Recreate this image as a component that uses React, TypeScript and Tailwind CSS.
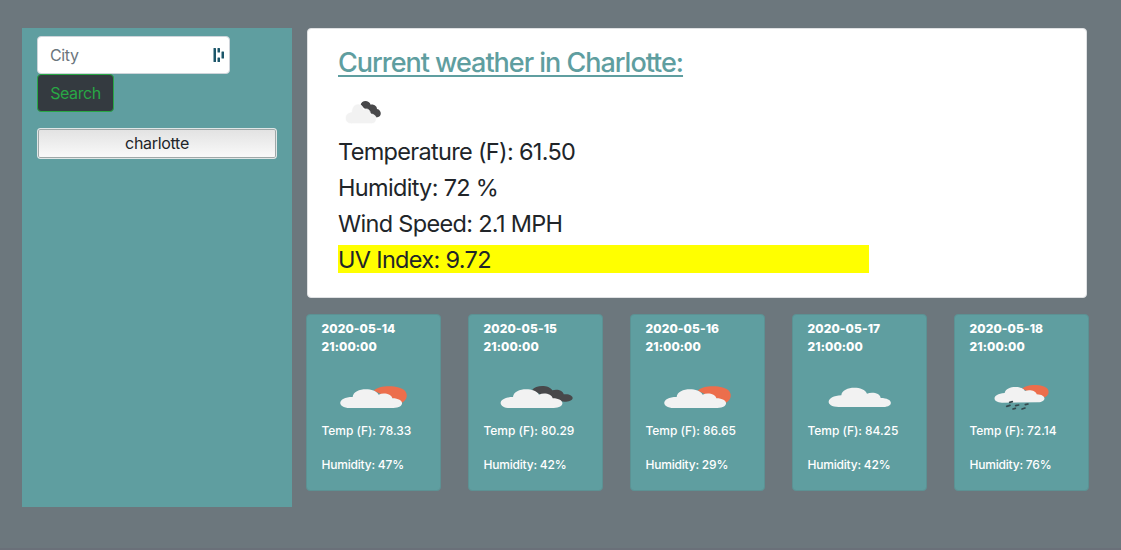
import React from 'react';

type IconKind = 'sun' | 'broken' | 'cloud' | 'rain';

const CLOUD =
  'M150 300 C110 300 110 267 158 267 C160 239 222 236 236 260 C251 253 275 258 277 271 C315 271 316 300 280 300 Z';

function WeatherIcon({ kind }: { kind: IconKind }) {
  return (
    <svg className="ml-[14px] block h-[30px] w-20" viewBox="105 225 240 90">
      {kind === 'sun' && (
        <>
          <path
            fill="#ec6e4c"
            d="M222 248 C236 231 300 230 316 250 C325 263 319 278 306 284 C296 274 284 275 250 262 Z"
          />
          <path fill="#f2f2f2" d={CLOUD} />
        </>
      )}
      {kind === 'broken' && (
        <>
          <path
            fill="#48484a"
            d="M210 247 C222 229 262 231 271 247 C286 242 304 248 305 259 C322 257 333 264 332 271 C331 279 312 284 296 280 L240 262 Z"
          />
          <path fill="#f2f2f2" transform="translate(-5 0)" d={CLOUD} />
        </>
      )}
      {kind === 'cloud' && (
        <path
          fill="#f2f2f2"
          d="M158 297 C116 297 118 264 166 262 C168 234 233 232 243 257 C258 251 283 255 284 270 C323 270 324 297 292 297 Z"
        />
      )}
      {kind === 'rain' && (
        <>
          <path
            fill="#ec6e4c"
            d="M223 242 C236 227 286 227 299 243 C306 254 299 264 290 268 L250 256 Z"
          />
          <path
            fill="#f2f2f2"
            d="M162 284 C130 283 132 257 170 255 C174 232 224 232 231 249 C246 244 264 249 266 259 C297 260 296 282 270 283 Z"
          />
          <g stroke="#34484d" strokeWidth="5" strokeLinecap="round">
            <path d="M185 283 L193 281" />
            <path d="M176 295 L186 292" />
            <path d="M203 293 L212 291" />
            <path d="M232 290 L240 288" />
            <path d="M195 303 L202 301" />
            <path d="M222 303 L231 300" />
          </g>
        </>
      )}
    </svg>
  );
}

const days: { date: string; icon: IconKind; temp: string; humidity: string }[] = [
  { date: '2020-05-14', icon: 'sun', temp: '78.33', humidity: '47%' },
  { date: '2020-05-15', icon: 'broken', temp: '80.29', humidity: '42%' },
  { date: '2020-05-16', icon: 'sun', temp: '86.65', humidity: '29%' },
  { date: '2020-05-17', icon: 'cloud', temp: '84.25', humidity: '42%' },
  { date: '2020-05-18', icon: 'rain', temp: '72.14', humidity: '76%' },
];

export default function App() {
  return (
    <div className="flex h-[550px] w-[1121px] items-start overflow-hidden border-b-2 border-[#6a7079] bg-[#6c777d] pt-7 pl-[22px] font-['Inter',sans-serif] text-[#212529]">
      <aside className="h-[479px] w-[270px] shrink-0 bg-[#5f9ea0] px-[15px] pt-2">
        <div className="flex h-[38px] w-[193px] items-center justify-between rounded-[4px] border border-[#ced4da] bg-white pr-1 pl-3">
          <span className="text-[16px] tracking-[-0.4px] text-[#6c757d]">City</span>
          <svg className="h-4 w-3" viewBox="0 0 12 16" fill="#1c566a">
            <rect x="0.5" y="1" width="2.5" height="14" rx="0.5" />
            <rect x="4.5" y="1" width="2.5" height="4.5" rx="0.5" />
            <rect x="4.5" y="10.5" width="2.5" height="4.5" rx="0.5" />
            <rect x="8.5" y="4.5" width="2.5" height="7" rx="0.5" />
          </svg>
        </div>
        <button className="block h-[38px] w-[77px] rounded-[4px] border border-[#28a745] bg-[#343a40] text-[16px] tracking-[-0.4px] text-[#28a745]">
          Search
        </button>
        <button className="mt-4 block h-[31px] w-60 rounded-[3px] border border-[#dfe6e6] bg-linear-to-b from-[#e2e2e2] to-[#fafafa] text-[16px] leading-[27px] tracking-[-0.3px] ring-1 ring-[#9fa8a8] ring-inset">
          charlotte
        </button>
      </aside>

      <main className="ml-[14px] w-[783px] shrink-0">
        <section className="ml-px h-[270px] w-[780px] rounded-[4px] border border-[#dfe1e3] bg-white pt-[17px] pl-[30px]">
          <h3 className="text-[27px] leading-[34px] font-medium tracking-[-1.02px] text-[#5f9ea0] underline decoration-2 underline-offset-[3px]">
            Current weather in Charlotte:
          </h3>
          <svg className="mt-4 ml-[7px] block h-7 w-10" viewBox="0 0 120 84">
            <path
              fill="#48484a"
              d="M46 29 C50 10 72 12 77 26 C88 24 96 32 96 39 C111 42 111 62 97 64 C88 65 84 60 80 55 L60 38 Z"
            />
            <path
              fill="#f2f2f2"
              stroke="#fff"
              strokeWidth="2"
              d="M19 83 C-6 82 -4 50 20 48 C21 19 51 16 56 41 C66 35 77 42 76 54 C99 53 99 82 80 83 Z"
            />
          </svg>
          <div className="mt-2.5 text-[23.5px] leading-9 tracking-[-0.68px]">
            <p>Temperature (F): 61.50</p>
            <p>Humidity: 72 %</p>
            <p>Wind Speed: 2.1 MPH</p>
            <p className="mt-[3px] h-7 w-[531px] bg-[#ffff00] leading-[30px]">UV Index: 9.72</p>
          </div>
        </section>

        <div className="mt-4 flex gap-[27px]">
          {days.map((day) => (
            <article
              key={day.date}
              className="h-[177px] w-[135px] shrink-0 rounded-[4px] border border-[#5c9193] bg-[#5f9ea0] pt-[5px] pl-[14px] text-[12px] leading-[18px] text-white"
            >
              <h5 className="w-[90px] pl-[0.5px] text-[12px] font-extrabold tracking-[0.1px]">
                {day.date} 21:00:00
              </h5>
              <div className="mt-[27px]">
                <WeatherIcon kind={day.icon} />
              </div>
              <p className="mt-[9px] pl-[0.5px] font-medium tracking-[-0.05px]">Temp (F): {day.temp}</p>
              <p className="mt-4 pl-[0.5px] font-medium tracking-[-0.2px]">Humidity: {day.humidity}</p>
            </article>
          ))}
        </div>
      </main>
    </div>
  );
}
